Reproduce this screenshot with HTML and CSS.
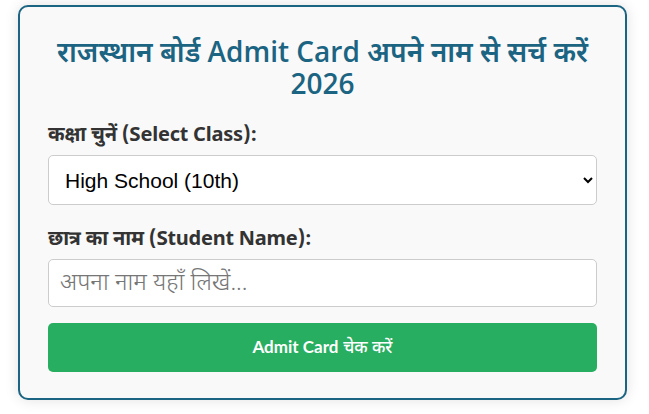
FILE: index.html
```html
<!DOCTYPE html>
<html lang="hi">
<head>
<meta charset="utf-8">
<title>Admit Card Search</title>
<link rel="stylesheet" href="styles.css">
</head>
<body>
<div class="card">
  <h2 class="title">राजस्थान बोर्ड Admit Card अपने नाम से सर्च करें 2026</h2>
  <div class="group group-class">
    <label class="label" for="cls">कक्षा चुनें (Select Class):</label>
    <select id="cls" class="field select">
      <option>High School (10th)</option>
      <option>Intermediate (12th)</option>
    </select>
  </div>
  <div class="group group-name">
    <label class="label" for="nm">छात्र का नाम (Student Name):</label>
    <input id="nm" class="field input" type="text" placeholder="अपना नाम यहाँ लिखें...">
  </div>
  <button class="btn" type="button"><span class="btn-latin">Admit Card</span> <span class="btn-hindi">चेक करें</span></button>
</div>
</body>
</html>
```

FILE: styles.css
```css
* { box-sizing: border-box; }
html, body { margin: 0; padding: 0; background: #ffffff; }
body {
  padding: 5px 22px 14px 18px;
  font-family: "Noto Sans Devanagari", "Open Sans", "Noto Sans", sans-serif;
}
.card {
  background: #f9f9f9;
  border: 2px solid #1b6482;
  border-radius: 10px;
  box-shadow: 0 0 14px rgba(0, 0, 0, 0.12);
  padding: 28px 28px 26px 28px;
}
.title {
  margin: 0 0 24px 0;
  text-align: center;
  color: #1b6482;
  font-family: "Open Sans", "Noto Sans Devanagari", sans-serif;
  font-size: 28px;
  line-height: 32px;
  font-weight: 600;
}
.group-class { margin-bottom: 22px; }
.group-name { margin-bottom: 16px; }
.label {
  display: block;
  color: #333333;
  font-size: 20px;
  font-weight: 700;
  line-height: 26px;
  margin-bottom: 6px;
  letter-spacing: -0.2px;
}
.field {
  display: block;
  width: 100%;
  background: #ffffff;
  border: 1px solid #cccccc;
  border-radius: 5px;
  color: #000000;
  font-family: "Liberation Sans", Arial, sans-serif;
  font-size: 21px;
  margin: 0;
}
.select { height: 50px; padding: 0 10px 0 12px; }
.input { height: 48px; padding: 0 11px; }
.input::placeholder {
  color: #767676;
  font-family: "Noto Sans Devanagari", "Open Sans", sans-serif;
  font-size: 24px;
  font-weight: 300;
}
.btn {
  display: block;
  width: 100%;
  height: 49px;
  margin: 0;
  background: #27ae60;
  color: #ffffff;
  border: none;
  border-radius: 5px;
  font-size: 17px;
}
.btn-latin {
  font-family: "Lato", sans-serif;
  font-weight: 700;
}
.btn-hindi {
  font-family: "Noto Sans Devanagari", sans-serif;
  font-weight: 500;
}
```
